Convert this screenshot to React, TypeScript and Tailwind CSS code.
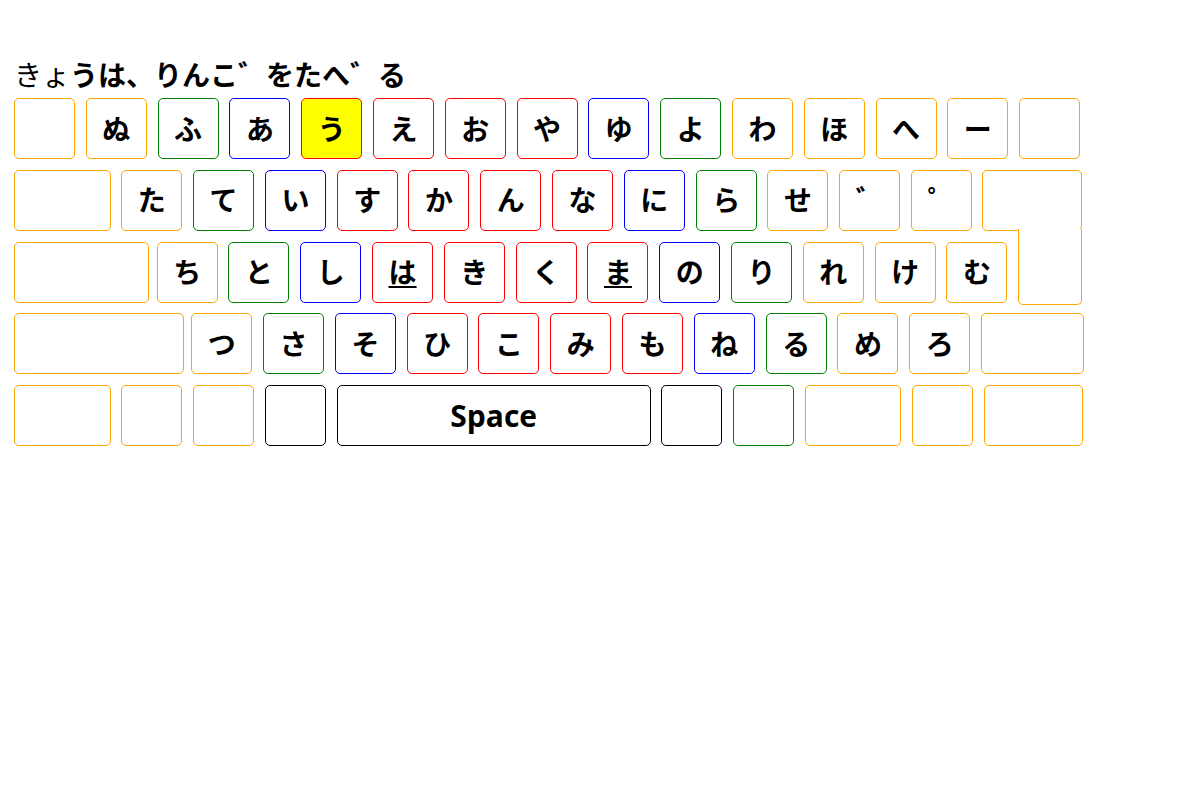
import clsx from "clsx";

const O = "border-[#ffa500]";
const G = "border-[#008000]";
const B = "border-[#0000ff]";
const R = "border-[#ff0000]";
const K = "border-black";

type Key = { t?: string; c: string; w?: string; hl?: boolean; u?: boolean; x?: string; f?: string };

const row1: Key[] = [
  { c: O },
  { t: "ぬ", c: O },
  { t: "ふ", c: G },
  { t: "あ", c: B },
  { t: "う", c: R, hl: true },
  { t: "え", c: R },
  { t: "お", c: R },
  { t: "や", c: R },
  { t: "ゆ", c: B },
  { t: "よ", c: G },
  { t: "わ", c: O },
  { t: "ほ", c: O },
  { t: "へ", c: O },
  { t: "ー", c: O },
  { c: O },
];

const row2: Key[] = [
  { c: O, w: "w-[96.5px]" },
  { t: "た", c: O },
  { t: "て", c: G },
  { t: "い", c: B },
  { t: "す", c: R },
  { t: "か", c: R },
  { t: "ん", c: R },
  { t: "な", c: R },
  { t: "に", c: B },
  { t: "ら", c: G },
  { t: "せ", c: O },
  { t: "゛", c: O },
  { t: "゜", c: O },
  { c: O, w: "w-[100.5px]", x: "-ml-[1px]" },
];

const row3: Key[] = [
  { c: O, w: "w-[134.7px]", x: "-mr-[2.8px]" },
  { t: "ち", c: O },
  { t: "と", c: G },
  { t: "し", c: B },
  { t: "は", c: R, u: true },
  { t: "き", c: R },
  { t: "く", c: R },
  { t: "ま", c: R, u: true },
  { t: "の", c: B },
  { t: "り", c: G },
  { t: "れ", c: O },
  { t: "け", c: O },
  { t: "む", c: O },
];

const row4: Key[] = [
  { c: O, w: "w-[169.7px]", x: "-mr-[3.2px]" },
  { t: "つ", c: O },
  { t: "さ", c: G },
  { t: "そ", c: B },
  { t: "ひ", c: R },
  { t: "こ", c: R },
  { t: "み", c: R },
  { t: "も", c: R },
  { t: "ね", c: B },
  { t: "る", c: G },
  { t: "め", c: O },
  { t: "ろ", c: O },
  { c: O, w: "w-[103px]" },
];

const row5: Key[] = [
  { c: O, w: "w-[96.5px]" },
  { c: O },
  { c: O },
  { c: K },
  { t: "Space", c: K, w: "w-[314px]", f: "text-[30px]" },
  { c: K },
  { c: G },
  { c: O, w: "w-[96.3px]" },
  { c: O },
  { c: O, w: "w-[99.5px]" },
];

function KeyCap({ k }: { k: Key }) {
  return (
    <div
      className={clsx(
        "flex h-[61px] shrink-0 items-center justify-center rounded-[5px] border font-bold text-black",
        k.f ?? "text-[28px]",
        k.c,
        k.w ?? "w-[61px]",
        k.hl ? "bg-[#ffff00]" : "bg-white",
        k.x
      )}
    >
      {k.t && <span className={clsx(k.u && "underline underline-offset-[3px]")}>{k.t}</span>}
    </div>
  );
}

function Row({ keys, children }: { keys: Key[]; children?: React.ReactNode }) {
  return (
    <div className="flex h-[61px] gap-[10.8px]">
      {keys.map((k, i) => (
        <KeyCap key={i} k={k} />
      ))}
      {children}
    </div>
  );
}

export default function App() {
  return (
    <div
      className="min-h-screen bg-white px-[14px] pt-[56px] text-black"
      style={{ fontFamily: '"Open Sans", "Noto Sans CJK JP", sans-serif' }}
    >
      <p className="mb-[4px] text-[28px] leading-[38px]">
        <span className="font-normal">きょ</span>
        <span className="font-bold">うは、りんこ゛をたへ゛る</span>
      </p>
      <div className="flex flex-col gap-[10.75px]">
        <Row keys={row1} />
        <Row keys={row2} />
        <Row keys={row3}>
          <div className="relative z-10 -ml-[0.5px] -mt-[13px] h-[76px] w-[64px] shrink-0 self-start rounded-b-[5px] border border-t-0 border-[#ffa500] bg-white" />
        </Row>
        <Row keys={row4} />
        <Row keys={row5} />
      </div>
    </div>
  );
}
